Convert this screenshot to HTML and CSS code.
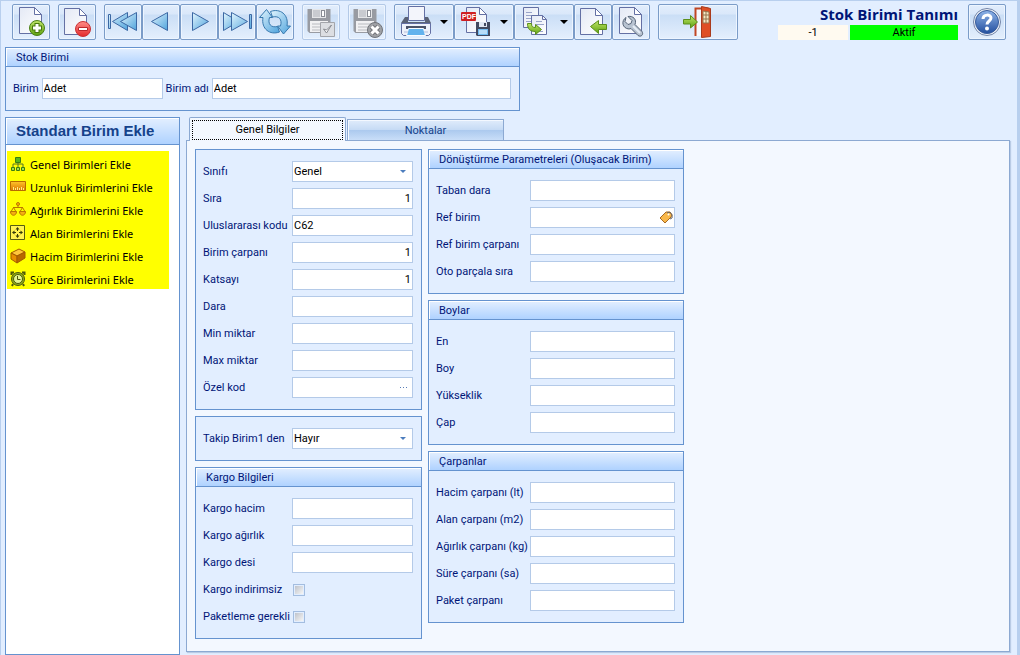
FILE: index.html
```html
<!DOCTYPE html>
<html lang="tr">
  <head>
    <meta charset="UTF-8" />
    <meta name="viewport" content="width=device-width, initial-scale=1.0" />
    <title>Stok Birimi Tanımı</title>
    <link rel="stylesheet" href="styles.css">
  </head>
  <body>
    <!-- shared gradients and shapes -->
    <svg class="defs" width="0" height="0" aria-hidden="true">
      <defs>
        <linearGradient id="g-page" x1="0" y1="0" x2="1" y2="1"><stop offset="0" stop-color="#e4e9f5"/><stop offset="1" stop-color="#fff"/></linearGradient>
        <linearGradient id="g-blue" x1="0" y1="0" x2="1" y2="1"><stop offset="0" stop-color="#e2f5fe"/><stop offset="1" stop-color="#4fa3dc"/></linearGradient>
        <linearGradient id="g-green" x1="0" y1="0" x2="0" y2="1"><stop offset="0" stop-color="#c0e66a"/><stop offset="1" stop-color="#5da10f"/></linearGradient>
        <linearGradient id="g-red" x1="0" y1="0" x2="0" y2="1"><stop offset="0" stop-color="#ff8d88"/><stop offset="1" stop-color="#e3292b"/></linearGradient>
        <linearGradient id="g-help" x1="0" y1="0" x2="0" y2="1"><stop offset="0" stop-color="#8fb4e8"/><stop offset="1" stop-color="#234f9f"/></linearGradient>
        <linearGradient id="g-orange" x1="0" y1="0" x2="0" y2="1"><stop offset="0" stop-color="#ffc52a"/><stop offset="1" stop-color="#dc7600"/></linearGradient>
        <symbol id="page" viewBox="0 0 32 32">
          <path d="M4.500 1.500h15l7 7v19h-22z" fill="url(#g-page)" stroke="#6470a4"/>
          <path d="M19.500 1.500v7h7z" fill="#fff" stroke="#6470a4" stroke-linejoin="round"/>
        </symbol>
        <symbol id="floppy" viewBox="0 0 32 32">
          <path d="M2.500 3h23v24h-21l-2-2z" fill="#989ba2"/>
          <path d="M7 3h14v9H7z" fill="#e5e6e8"/>
          <path d="M8 4h7v7H8z" fill="#c9cbd0"/><path d="M16 4h4v7h-4z" fill="#898c94"/><path d="M17 5h2v5h-2z" fill="#fff"/>
          <path d="M5 15h18v11H5z" fill="#f1f1f3"/>
          <path d="M7 18h13M7 21h13M7 24h13" stroke="#b9bbc0"/>
        </symbol>
      </defs>
    </svg>

    <div class="window">
      <header class="toolbar">
        <div class="tool-group">
          <button class="tool" type="button" aria-label="Yeni">
            <svg viewBox="0 0 32 32"><use href="#page"/><circle cx="22" cy="22" r="7.500" fill="url(#g-green)" stroke="#4a7f18"/><path d="M22 17v10M17 22h10" stroke="#47760f" stroke-width="5"/><path d="M22 18v8M18 22h8" stroke="#fff" stroke-width="3"/></svg>
          </button>
        </div>
        <div class="tool-group">
          <button class="tool" type="button" aria-label="Sil">
            <svg viewBox="0 0 32 32"><use href="#page" x="-1" y="1"/><circle cx="22" cy="23" r="7.500" fill="url(#g-red)" stroke="#c83236"/><path d="M17.500 21.500h9v3h-9z" fill="#fff" stroke="#b9282c"/></svg>
          </button>
        </div>
        <div class="tool-group">
          <button class="tool" type="button" aria-label="İlk">
            <svg viewBox="0 0 32 32" fill="url(#g-blue)" stroke="#3c68a4" stroke-linejoin="round"><path d="M1.500 8.500h2v14h-2zM20.500 6.500v18l-15-9z"/><path d="M29.500 6.500v18l-16-9z"/></svg>
          </button>
          <button class="tool" type="button" aria-label="Önceki">
            <svg viewBox="0 0 32 32" fill="url(#g-blue)" stroke="#3c68a4" stroke-linejoin="round"><path d="M22.500 6.500v18l-16-9z"/></svg>
          </button>
          <button class="tool" type="button" aria-label="Sonraki">
            <svg viewBox="0 0 32 32" fill="url(#g-blue)" stroke="#3c68a4" stroke-linejoin="round"><path d="M9.500 6.500v18l16-9z"/></svg>
          </button>
          <button class="tool" type="button" aria-label="Son">
            <svg viewBox="0 0 32 32" fill="url(#g-blue)" stroke="#3c68a4" stroke-linejoin="round"><path d="M2.500 6.500v18l15-9z"/><path d="M10.500 6.500v18l16-9zM28.500 8.500h2v14h-2z"/></svg>
          </button>
          <button class="tool" type="button" aria-label="Yenile">
            <svg viewBox="0 0 32 32" fill="url(#g-blue)" stroke="#3678ae" stroke-linejoin="round"><path d="M7.500 3.500L13.500 11.500H10.500C8.500 18 12 22 18.500 20.500L20.500 26C11 29.500 2 23 4 11.500H.5z"/><path d="M24.500 28L18.500 20H21.500C23.500 13.500 20 9.500 13.500 11L11.500 5.500C21 2 30 8.500 28 20H31.500z"/></svg>
          </button>
        </div>
        <div class="tool-group">
          <button class="tool" type="button" aria-label="Kaydet" disabled>
            <svg viewBox="0 0 32 32"><use href="#floppy"/><path d="M15.500 16.500h14v14h-14z" fill="#dcdee2" stroke="#a3a5aa"/><path d="M18.500 23l3 4 5-8-5 5z" fill="#fff" stroke="#888a90"/></svg>
          </button>
        </div>
        <div class="tool-group">
          <button class="tool" type="button" aria-label="Vazgeç" disabled>
            <svg viewBox="0 0 32 32"><use href="#floppy"/><circle cx="24" cy="24" r="7.500" fill="#a0a2a6" stroke="#707379"/><path d="M20.500 20.500l7 7M27.500 20.500l-7 7" stroke="#74767b" stroke-width="5"/><path d="M20.500 20.500l7 7M27.500 20.500l-7 7" stroke="#fff" stroke-width="3"/></svg>
          </button>
        </div>
        <div class="tool-group">
          <button class="tool tool-menu" type="button" aria-label="Yazdır">
            <svg viewBox="0 0 32 32"><path d="M8.500.500h16v14h-16z" fill="#f3f5fb" stroke="#6470a4"/><path d="M5 11h3v5h17v-5h3l3 6v8H1v-8z" fill="#5a6276"/><path d="M1.500 17.500h29v10l-2 2h-25l-2-2z" fill="#eef1fa" stroke="#6470a4"/><path d="M6 20h20v3H6z" fill="#4b5269"/><path d="M8.500 22.500h15l2 7h-19z" fill="#62b2ed" stroke="#f8fbff"/><path d="M4 26h4M24 26h4" stroke="#b7c0dc"/></svg>
            <span class="caret"></span>
          </button>
          <button class="tool tool-menu" type="button" aria-label="PDF kaydet">
            <svg viewBox="0 0 32 32"><path d="M6.500 1.500h13l7 7v18h-20z" fill="url(#g-page)" stroke="#6470a4"/><path d="M19.500 1.500v7h7z" fill="#fff" stroke="#6470a4"/><rect x="1" y="6" width="15" height="9" rx="1" fill="#cf1f23"/><text x="2" y="13" class="pdf-text">PDF</text><path d="M16 16h14v14H17l-1-1z" fill="#414960"/><path d="M19 16h8v5h-8z" fill="#dfe6f2"/><path d="M24 17h2v3h-2z" fill="#414960"/><path d="M18 23h10v6H18z" fill="#70baf0"/><path d="M19 25h8M19 27h8" stroke="#fff"/></svg>
            <span class="caret"></span>
          </button>
          <button class="tool tool-menu" type="button" aria-label="Kopyala">
            <svg viewBox="0 0 32 32"><path d="M3.500 1.500h15v20h-15z" fill="url(#g-page)" stroke="#6470a4"/><path d="M6 6.500h6M6 9.500h10M6 12.500h7M6 15.500h7" stroke="#99a4c9"/><path d="M11.500 9.500h11l4 4v15h-15z" fill="url(#g-page)" stroke="#6470a4"/><path d="M22.500 9.500v4h4" fill="none" stroke="#6470a4"/><path d="M16 15.500h6M16 18.500h8M16 25.500h7" stroke="#99a4c9"/><path d="M7.500 17.500h4c0 3 1 4 4 4v-3l6 5-6 5v-3c-5 0-8-2-8-8z" fill="url(#g-green)" stroke="#5b8f1c"/></svg>
            <span class="caret"></span>
          </button>
          <button class="tool" type="button" aria-label="Aktar">
            <svg viewBox="0 0 32 32"><use href="#page" x="-1" y="1"/><path d="M13.500 20.500l8-6v4h8v5h-8v4z" fill="url(#g-green)" stroke="#5b8f1c" stroke-linejoin="round"/></svg>
          </button>
          <button class="tool" type="button" aria-label="Ayarlar">
            <svg viewBox="0 0 32 32"><use href="#page"/><path d="M11 11.500c-5 3-4 11 3 11.500l2-.5 7 7c3 2 6-1 4-4l-7-7c2-5-2-9-7-8l4 4-1 3-3 1-3-3z" fill="#b8c3d1" stroke="#566477" stroke-linejoin="round"/><path d="M18 20l7 7" stroke="#e6edf5" stroke-width="2"/></svg>
          </button>
        </div>
        <div class="tool-group">
          <button class="tool tool-exit" type="button" aria-label="Çıkış">
            <svg viewBox="0 0 32 32"><path d="M13.500 30V2.500h12V30" fill="#f6f8fc" stroke="#c04624" stroke-width="2"/><path d="M19.500.500l9 2v28l-9 1z" fill="#df4f25" stroke="#a93b1c"/><path d="M21 5l6 1v11h-6z" fill="#f5e8c3" stroke="#95744e"/><path d="M24 5v12M21 9h6M21 13h6" stroke="#95744e"/><path d="M1.500 13.500h7v-4l7 6.500-7 6v-4h-7z" fill="url(#g-green)" stroke="#5b8f1c" stroke-linejoin="round"/></svg>
          </button>
        </div>

        <div class="page-info">
          <h1>Stok Birimi Tanımı</h1>
          <div class="status">
            <span class="status-id">-1</span>
            <span class="status-active">Aktif</span>
          </div>
        </div>
        <button class="tool" type="button" aria-label="Yardım">
          <svg viewBox="0 0 32 32"><circle cx="16" cy="16" r="13.500" fill="#eef1f7" stroke="#7385a8"/><circle cx="16" cy="16" r="11.500" fill="url(#g-help)" stroke="#385c9c"/><path d="M12 13c0-5 8-5 8-1 0 3-4 3-4 6.500" fill="none" stroke="#fff" stroke-width="3"/><circle cx="16" cy="22.500" r="2" fill="#fff"/></svg>
        </button>
      </header>

      <section class="group unit-group">
        <h2>Stok Birimi</h2>
        <div class="unit-fields">
          <label for="birim">Birim</label>
          <input type="text" id="birim" class="unit-code" value="Adet" />
          <label for="birim-adi">Birim adı</label>
          <input type="text" id="birim-adi" class="unit-name" value="Adet" />
        </div>
      </section>

      <div class="content">
        <aside class="sidebar">
          <h2>Standart Birim Ekle</h2>
          <ul>
            <li><button type="button"><svg viewBox="0 0 16 16"><path d="M8 5v6M3 12V8h10v4" fill="none" stroke="#557526"/><path d="M5.500 1.500h5v5h-5z" fill="#56b51c" stroke="#397c12"/><path d="M1.500 11.500h3v3h-3zM6.500 11.500h3v3h-3zM11.500 11.500h3v3h-3z" fill="#a4df4a" stroke="#397c12"/></svg>Genel Birimleri Ekle</button></li>
            <li><button type="button"><svg viewBox="0 0 16 16"><path d="M.5 2.500h15v9H.5z" fill="url(#g-orange)" stroke="#b86b00"/><path d="M3.500 8v3M5.500 9v2M7.500 8v3M9.500 9v2M11.500 8v3M13.500 9v2" stroke="#ffec86"/></svg>Uzunluk Birimlerini Ekle</button></li>
            <li><button type="button"><svg viewBox="0 0 16 16" fill="none" stroke="#bb7600"><circle cx="8" cy="2" r="1.500" fill="#ffb200"/><path d="M8 4v2M3 5.500h10M3.500 5.500l-3 5M3.500 5.500l3 5M12.500 5.500l-3 5M12.500 5.500l3 5"/><path d="M.5 9.500h6c0 5-6 5-6 0zM9.500 9.500h6c0 5-6 5-6 0z" fill="#f4ae12"/></svg>Ağırlık Birimlerini Ekle</button></li>
            <li><button type="button"><svg viewBox="0 0 16 16"><path d="M.5.500h14v14H.5z" fill="#fff34f" stroke="#555e10"/><path d="M7.500 3v3M7.500 9v3M3 7.500h3M9 7.500h3" stroke="#343b09"/><path d="M5.500 4.500h4l-2-2.500zM5.500 10.500h4l-2 2.500zM4.500 5.500v4L2 7.500zM10.500 5.500v4L13 7.500z" fill="#343b09"/></svg>Alan Birimlerini Ekle</button></li>
            <li><button type="button"><svg viewBox="0 0 16 16" stroke="#a45b00" stroke-linejoin="round"><path d="M1 5l8-4 6 3-8 4z" fill="#ffc63b"/><path d="M1 5l6 3v7l-6-4z" fill="#e98f00"/><path d="M7 8l8-4v6l-8 5z" fill="#b76900"/></svg>Hacim Birimlerini Ekle</button></li>
            <li><button type="button"><svg viewBox="0 0 16 16" fill="#b7e61b" stroke="#4c570b"><path d="M1.500 4V1.500H4M14.500 4V1.500H12M3 13l-1 2M13 13l1 2" stroke-width="2"/><circle cx="8" cy="8" r="6.500" fill="#8fae1a"/><circle cx="8" cy="8" r="4.500" fill="#e4f590"/><path d="M7.500 5v3.500h3" fill="none"/></svg>Süre Birimlerini Ekle</button></li>
          </ul>
        </aside>

        <main class="tabs">
          <div class="tab-list" role="tablist">
            <button class="tab active" type="button" role="tab" aria-selected="true"><span>Genel Bilgiler</span></button>
            <button class="tab" type="button" role="tab" aria-selected="false"><span>Noktalar</span></button>
          </div>
          <div class="tab-panel" role="tabpanel">
            <div class="column column-left">
              <section class="group">
                <div class="fields">
                  <label for="sinifi">Sınıfı</label>
                  <div class="field"><select id="sinifi"><option>Genel</option></select><span class="arrow"></span></div>
                  <label for="sira">Sıra</label>
                  <input type="text" id="sira" class="number" value="1" />
                  <label for="kod">Uluslararası kodu</label>
                  <input type="text" id="kod" value="C62" />
                  <label for="carpan">Birim çarpanı</label>
                  <input type="text" id="carpan" class="number" value="1" />
                  <label for="katsayi">Katsayı</label>
                  <input type="text" id="katsayi" class="number" value="1" />
                  <label for="dara">Dara</label>
                  <input type="text" id="dara" />
                  <label for="min">Min miktar</label>
                  <input type="text" id="min" />
                  <label for="max">Max miktar</label>
                  <input type="text" id="max" />
                  <label for="ozel">Özel kod</label>
                  <div class="field"><input type="text" id="ozel" /><button class="lookup" type="button" aria-label="Seç"><svg viewBox="0 0 16 16" fill="#5a7fb8"><path d="M4 8h1v1H4zM7 8h1v1H7zM10 8h1v1h-1z"/></svg></button></div>
                </div>
              </section>
              <section class="group">
                <div class="fields">
                  <label for="takip">Takip Birim1 den</label>
                  <div class="field"><select id="takip"><option>Hayır</option></select><span class="arrow"></span></div>
                </div>
              </section>
              <section class="group">
                <h2>Kargo Bilgileri</h2>
                <div class="fields">
                  <label for="hacim">Kargo hacim</label>
                  <input type="text" id="hacim" />
                  <label for="agirlik">Kargo ağırlık</label>
                  <input type="text" id="agirlik" />
                  <label for="desi">Kargo desi</label>
                  <input type="text" id="desi" />
                  <label for="indirimsiz">Kargo indirimsiz</label>
                  <input type="checkbox" id="indirimsiz" />
                  <label for="paketleme">Paketleme gerekli</label>
                  <input type="checkbox" id="paketleme" />
                </div>
              </section>
            </div>

            <div class="column column-right">
              <section class="group">
                <h2>Dönüştürme Parametreleri (Oluşacak Birim)</h2>
                <div class="fields">
                  <label for="taban">Taban dara</label>
                  <input type="text" id="taban" />
                  <label for="ref">Ref birim</label>
                  <div class="field"><input type="text" id="ref" /><button class="lookup" type="button" aria-label="Seç"><svg viewBox="0 0 16 16"><path d="M2 9l6-6h4l2 3-1 2-6 6z" fill="#f9b84a" stroke="#a66a26" stroke-linejoin="round"/><circle cx="10.500" cy="5.500" r="1" fill="#fff"/><path d="M9 4c3-2 6 1 5 5l-2 1" fill="none" stroke="#63656b"/></svg></button></div>
                  <label for="ref-carpan">Ref birim çarpanı</label>
                  <input type="text" id="ref-carpan" />
                  <label for="oto">Oto parçala sıra</label>
                  <input type="text" id="oto" />
                </div>
              </section>
              <section class="group">
                <h2>Boylar</h2>
                <div class="fields">
                  <label for="en">En</label>
                  <input type="text" id="en" />
                  <label for="boy">Boy</label>
                  <input type="text" id="boy" />
                  <label for="yukseklik">Yükseklik</label>
                  <input type="text" id="yukseklik" />
                  <label for="cap">Çap</label>
                  <input type="text" id="cap" />
                </div>
              </section>
              <section class="group">
                <h2>Çarpanlar</h2>
                <div class="fields">
                  <label for="c-hacim">Hacim çarpanı (lt)</label>
                  <input type="text" id="c-hacim" />
                  <label for="c-alan">Alan çarpanı (m2)</label>
                  <input type="text" id="c-alan" />
                  <label for="c-agirlik">Ağırlık çarpanı (kg)</label>
                  <input type="text" id="c-agirlik" />
                  <label for="c-sure">Süre çarpanı (sa)</label>
                  <input type="text" id="c-sure" />
                  <label for="c-paket">Paket çarpanı</label>
                  <input type="text" id="c-paket" />
                </div>
              </section>
            </div>
          </div>
        </main>
      </div>
    </div>
  </body>
</html>
```

FILE: styles.css
```css
* {
  box-sizing: border-box;
}

body {
  margin: 0;
  font-family: Roboto, "Liberation Sans", sans-serif;
  font-size: 11px;
  line-height: 13px;
  color: #001577;
  background-color: #e2eeff;
}

h1,
h2,
ul {
  margin: 0;
  padding: 0;
}

button,
input,
select {
  font: inherit;
}

.defs {
  position: absolute;
}

.window {
  min-height: 100vh;
  display: flex;
  flex-direction: column;
  border: 1px solid #b8cfee;
  border-right-width: 3px;
  border-bottom: none;
}

/* toolbar */
.toolbar {
  display: flex;
  gap: 8px;
  padding: 3px 11px 7px;
}

.tool-group {
  display: flex;
}

.tool {
  display: flex;
  align-items: center;
  justify-content: center;
  width: 38px;
  height: 36px;
  padding: 0;
  border: 1px solid #7b9cc8;
  border-radius: 2px;
  background: linear-gradient(#e2edfc 0%, #dae8fa 27%, #cadef6 29%, #e4effd 100%);
  box-shadow: inset 0 0 0 1px #edf5ff;
}

.tool svg {
  width: 32px;
  height: 32px;
}

.tool:disabled {
  border-color: #b3c9e7;
}

.tool-menu {
  width: 60px;
  gap: 8px;
}

.tool-exit {
  width: 80px;
}

.caret {
  border: 4px solid transparent;
  border-top-color: #000;
  border-bottom: none;
}

.pdf-text {
  font: bold 7px "Liberation Sans", sans-serif;
  fill: #fff;
}

.page-info {
  width: 180px;
  margin-left: auto;
  margin-right: 2px;
}

.page-info h1 {
  font-family: "Open Sans", sans-serif;
  font-size: 15px;
  line-height: 21px;
  text-align: right;
  white-space: nowrap;
}

.status {
  display: flex;
  gap: 2px;
  color: #000;
  line-height: 15px;
  text-align: center;
}

.status-id {
  width: 70px;
  background-color: #fffaf0;
}

.status-active {
  flex: 1;
  background-color: #00ff00;
}

/* group boxes */
.group {
  border: 1px solid #6593cf;
  background-color: #e2eeff;
}

.group h2 {
  padding: 3px 10px 2px;
  border-bottom: 1px solid #6593cf;
  box-shadow: inset 1px 1px 0 #fff;
  background: linear-gradient(#e3efff, #afd2ff);
  font-size: 11px;
  font-weight: normal;
}

.unit-group {
  width: 515px;
  margin-left: 4px;
}

.unit-fields {
  display: flex;
  align-items: center;
  padding: 11px 8px 11px 7px;
  gap: 3px;
}

.unit-code {
  width: 121px;
}

.unit-name {
  flex: 1;
}

input[type="text"],
select {
  min-width: 0;
  height: 21px;
  padding: 0 1px;
  border: 1px solid #b4cae8;
  border-radius: 0;
  background-color: #fff;
  color: #000;
}

input.number {
  text-align: right;
}

select {
  appearance: none;
}

.field {
  position: relative;
  display: flex;
}

.field input,
.field select {
  width: 100%;
}

.arrow {
  position: absolute;
  top: 9px;
  right: 7px;
  border: 3px solid transparent;
  border-top-color: #4c7dbd;
  border-bottom: none;
  pointer-events: none;
}

.lookup {
  position: absolute;
  top: 2px;
  right: 1px;
  width: 16px;
  height: 16px;
  padding: 0;
  border: none;
  background: none;
}

input[type="checkbox"] {
  appearance: none;
  width: 12px;
  height: 12px;
  margin: 0 0 0 1px;
  border: 1px solid #a3bde0;
  background: linear-gradient(135deg, #bfc3cb, #f6f6f6) content-box #fff;
  padding: 1px;
}

/* content */
.content {
  flex: 1;
  display: flex;
  gap: 6px;
  padding: 6px 7px 0 4px;
}

.sidebar {
  width: 175px;
  border: 1px solid #6593cf;
  background-color: #fff;
}

.sidebar h2 {
  padding: 0 10px;
  border-bottom: 1px solid #6593cf;
  box-shadow: inset 1px 1px 0 #fff;
  background: linear-gradient(#e3efff, #afd2ff);
  color: #15428b;
  font: bold 15px/26px "Liberation Sans", sans-serif;
}

.sidebar ul {
  width: 162px;
  margin: 6px 1px;
  list-style: none;
  background-color: #ff0;
}

.sidebar li button {
  display: flex;
  align-items: center;
  gap: 4px;
  width: 100%;
  height: 23px;
  padding: 3px 3px 0;
  border: none;
  background: none;
  color: #000;
  font-family: "Noto Sans", sans-serif;
  font-size: 11px;
  white-space: nowrap;
}

.sidebar li svg {
  width: 16px;
  height: 16px;
}

/* tabs */
.tabs {
  flex: 1;
  display: flex;
  flex-direction: column;
  margin-bottom: 3px;
}

.tab-list {
  display: flex;
  align-items: flex-end;
  gap: 1px;
  padding-left: 3px;
}

.tab {
  width: 157px;
  height: 21px;
  padding: 0;
  border: 1px solid #8ca9d2;
  border-bottom: none;
  background: linear-gradient(#e0ecfb 0%, #c6dbf5 48%, #abc9ee 50%, #c9def8 100%);
  box-shadow: inset 1px 1px 0 #f3f8ff;
  color: #15428b;
}

.tab.active {
  position: relative;
  height: 24px;
  margin-bottom: -1px;
  padding: 2px;
  border-radius: 2px 2px 0 0;
  background: #f3f8ff;
  color: #000;
}

.tab.active span {
  display: block;
  border: 1px dotted #000;
  line-height: 18px;
}

.tab-panel {
  flex: 1;
  display: flex;
  align-items: flex-start;
  gap: 6px;
  padding: 8px;
  border: 1px solid #8ca9d2;
  box-shadow: 1px 1px 1px #b9cbe5;
  background-color: #f3f8ff;
}

.column {
  display: flex;
  flex-direction: column;
  gap: 6px;
}

.column-left {
  width: 227px;
}

.column-right {
  width: 256px;
}

.fields {
  display: grid;
  grid-template-columns: 89px 1fr;
  grid-auto-rows: 21px;
  align-items: center;
  row-gap: 6px;
  padding: 11px 8px 11px 7px;
}

.column-right .fields {
  grid-template-columns: 94px 1fr;
}

.fields label {
  white-space: nowrap;
}
```
